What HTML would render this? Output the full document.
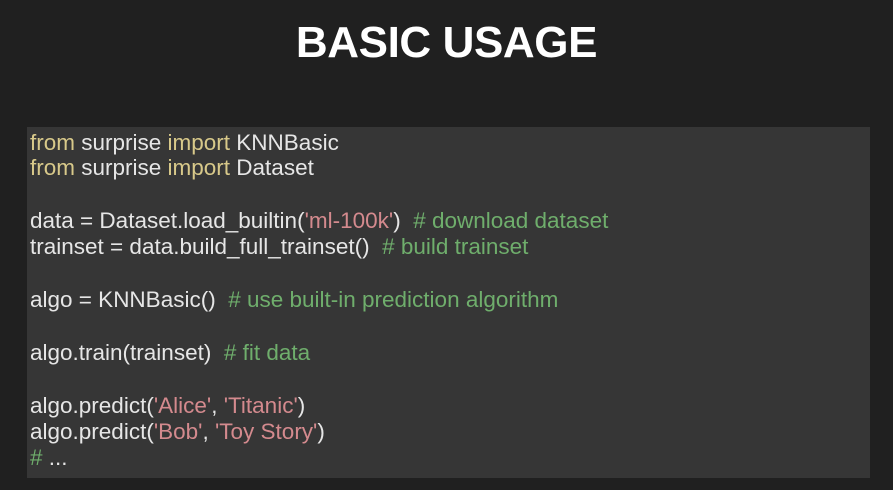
<!DOCTYPE html>
<html><head><style>
body{margin:0;width:893px;height:490px;background:#202020;overflow:hidden;font-family:"Liberation Sans",sans-serif;position:relative}
h1{position:absolute;top:18px;left:0;width:893px;text-align:center;margin:0;color:#fff;font-size:44px;font-weight:bold;letter-spacing:-0.4px}
.box{position:absolute;left:27px;top:127px;width:843px;height:351px;background:#363636}
.l{position:absolute;left:30px;color:#e6e6e6;font-size:22.5px;white-space:pre;letter-spacing:0}
.k{color:#d8c98a}.s{color:#d48a8e}.c{color:#6fae6c}
</style></head><body>
<h1>BASIC USAGE</h1>
<div class="box"></div>
<div class="l" style="top:130px"><span class="k">from</span> surprise <span class="k">import</span> KNNBasic</div>
<div class="l" style="top:155px"><span class="k">from</span> surprise <span class="k">import</span> Dataset</div>
<div class="l" style="top:208px">data = Dataset.load_builtin(<span class="s">'ml-100k'</span>)  <span class="c"># download dataset</span></div>
<div class="l" style="top:234px">trainset = data.build_full_trainset()  <span class="c"># build trainset</span></div>
<div class="l" style="top:287px">algo = KNNBasic()  <span class="c"># use built-in prediction algorithm</span></div>
<div class="l" style="top:340px">algo.train(trainset)  <span class="c"># fit data</span></div>
<div class="l" style="top:393px">algo.predict(<span class="s">'Alice'</span>, <span class="s">'Titanic'</span>)</div>
<div class="l" style="top:419px">algo.predict(<span class="s">'Bob'</span>, <span class="s">'Toy Story'</span>)</div>
<div class="l" style="top:445px"><span class="c">#</span> ...</div>
</body></html>
